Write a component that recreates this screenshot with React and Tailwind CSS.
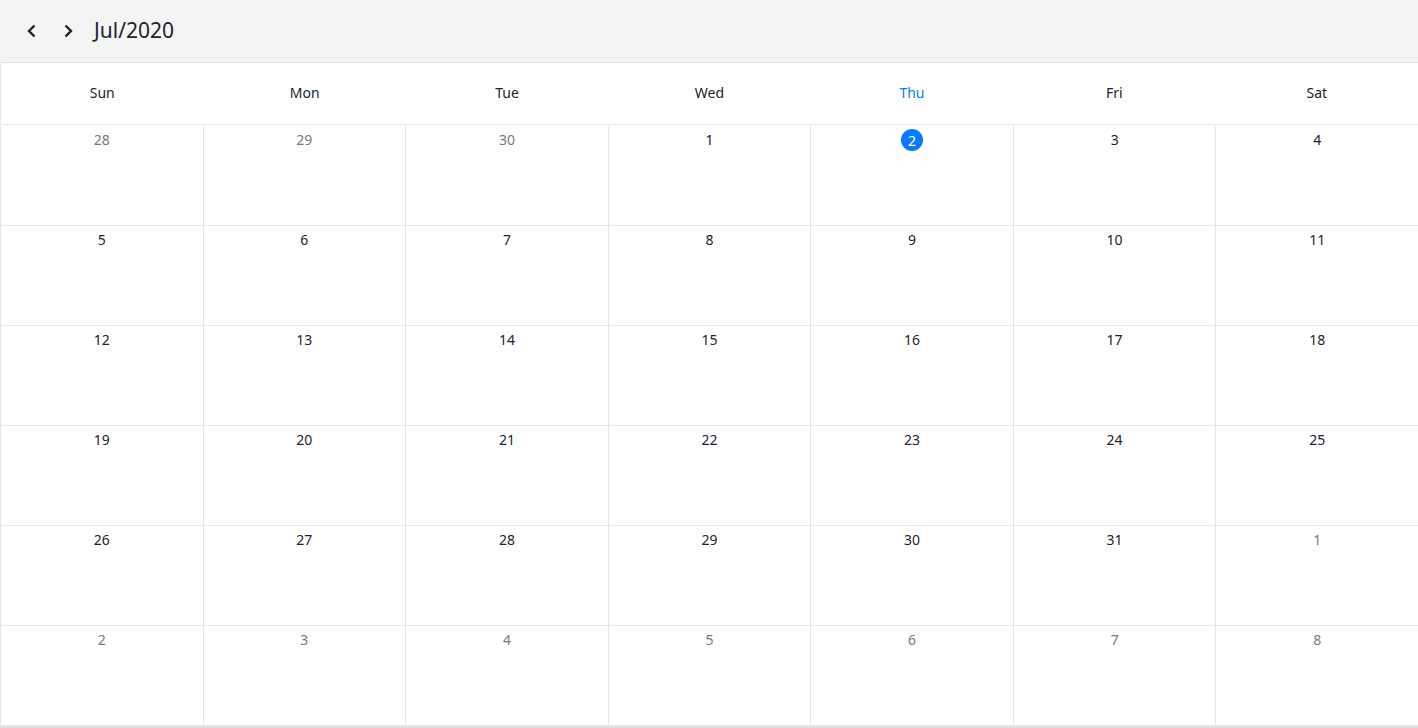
import React from 'react';

const days = ['Sun', 'Mon', 'Tue', 'Wed', 'Thu', 'Fri', 'Sat'];

// 6 weeks for Jul/2020, starting Sun 28 Jun
const buildWeeks = () => {
    const weeks = [];
    let d = new Date(2020, 5, 28);
    for (let w = 0; w < 6; w++) {
        const week = [];
        for (let i = 0; i < 7; i++) {
            week.push({ day: d.getDate(), current: d.getMonth() === 6, today: d.getMonth() === 6 && d.getDate() === 2 });
            d = new Date(d.getFullYear(), d.getMonth(), d.getDate() + 1);
        }
        weeks.push(week);
    }
    return weeks;
};

const Chevron = ({ dir }) => (
    <svg width="16" height="16" viewBox="0 0 16 16" fill="none">
        <path
            d={dir === 'left' ? 'M10.5 2.5 L5 8 L10.5 13.5' : 'M5.5 2.5 L11 8 L5.5 13.5'}
            stroke="#222"
            strokeWidth="2.4"
        />
    </svg>
);

const App = () => {
    const weeks = buildWeeks();

    return (
        <div className="w-[1418px] h-[728px] bg-white text-[#212529] overflow-hidden" style={{ fontFamily: '"Noto Sans", "Open Sans", sans-serif' }}>
            <div className="h-[63px] bg-[#f4f4f4] border-b border-[#e2e2e2] flex items-center pl-[24px]">
                <button className="w-[16px] h-[16px] flex items-center justify-center">
                    <Chevron dir="left" />
                </button>
                <button className="w-[16px] h-[16px] ml-[20px] flex items-center justify-center">
                    <Chevron dir="right" />
                </button>
                <span className="ml-[18px] text-[21px] leading-none pb-[1px]">Jul/2020</span>
            </div>

            <div className="grid grid-cols-7 h-[62px] border-b border-l border-[#e8e8e8]">
                {days.map((d) => (
                    <div
                        key={d}
                        className={`flex items-center justify-center pb-[2px] text-[14px] ${d === 'Thu' ? 'text-[#0d7cf2]' : 'text-[#212529]'}`}
                    >
                        {d}
                    </div>
                ))}
            </div>

            <div className="mt-[1px]">
                {weeks.map((week, wi) => (
                    <div key={wi} className="grid grid-cols-7 h-[100px] border-b border-[#e8e8e8]">
                        {week.map((c, ci) => (
                            <div key={ci} className="flex justify-center pt-[4px] border-l border-[#e4e4e4]">
                                {c.today ? (
                                    <span className="w-[22px] h-[22px] -mt-[1px] rounded-full bg-[#0a7aff] text-white text-[14px] flex items-center justify-center">
                                        {c.day}
                                    </span>
                                ) : (
                                    <span className={`text-[14px] leading-[20px] ${c.current ? 'text-[#212529]' : 'text-[#7a7a7a]'}`}>
                                        {c.day}
                                    </span>
                                )}
                            </div>
                        ))}
                    </div>
                ))}
                <div className="h-[2px] bg-[#e0e0e0]" />
            </div>
        </div>
    );
};

export default App;
